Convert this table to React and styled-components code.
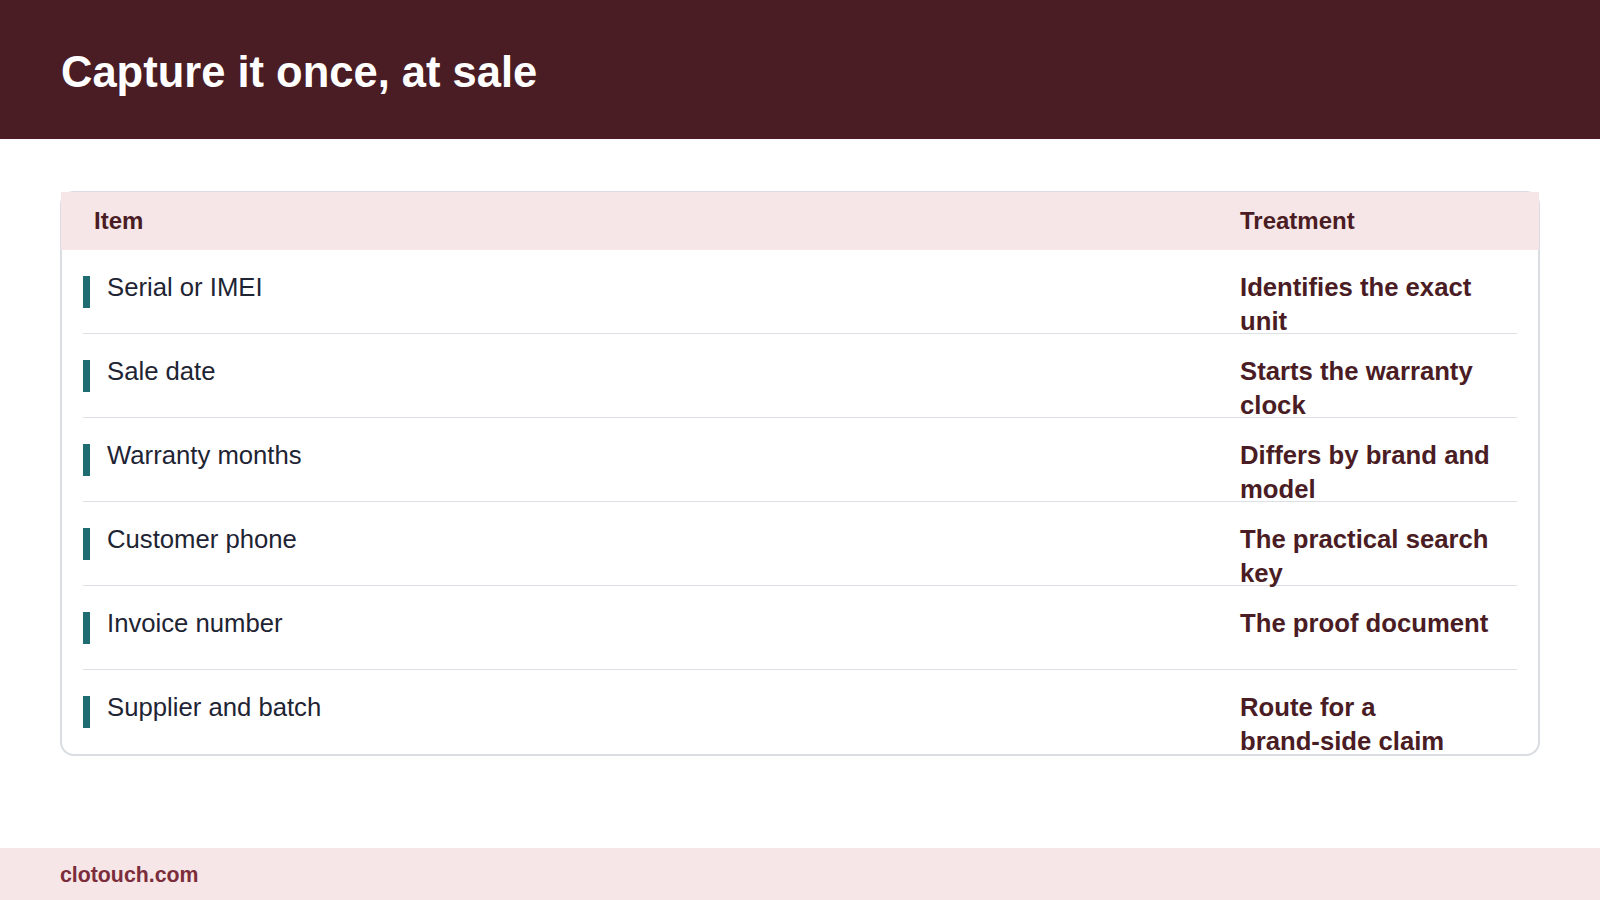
import styled, { createGlobalStyle } from 'styled-components';

const GlobalStyle = createGlobalStyle`
  html, body {
    margin: 0;
    padding: 0;
    background: #ffffff;
  }
  body {
    font-family: 'Liberation Sans', Arial, sans-serif;
  }
  * {
    box-sizing: border-box;
  }
`;

const Page = styled.div`
  width: 1600px;
  height: 900px;
  display: flex;
  flex-direction: column;
  overflow: hidden;
`;

const TopBar = styled.header`
  height: 139px;
  flex: none;
  background: #4a1c24;
  display: flex;
  align-items: center;
  padding: 6px 61px 0;
`;

const Title = styled.h1`
  margin: 0;
  color: #ffffff;
  font-size: 43.5px;
  font-weight: 700;
`;

const Main = styled.main`
  flex: 1;
  padding: 52px 60px 0;
`;

const Card = styled.div`
  border: 2px solid #d9dce2;
  border-radius: 14px;
`;

const HeadRow = styled.div`
  display: grid;
  grid-template-columns: 1fr 277px;
  align-items: center;
  height: 58px;
  margin: -1px -1px 0;
  padding: 0 22px 0 33px;
  background: #f6e6e7;
`;

const HeadCell = styled.div`
  color: #4a1c24;
  font-size: 24px;
  font-weight: 700;
`;

const Body = styled.div`
  padding: 0 21px;
`;

const Row = styled.div`
  display: grid;
  grid-template-columns: 1fr 277px;
  height: 84px;
  padding-top: 20px;
  border-bottom: ${(p) => (p.$last ? 'none' : '1px solid #dcdfe4')};
`;

const ItemCell = styled.div`
  display: flex;
  align-items: flex-start;
  gap: 17px;
`;

const Marker = styled.span`
  flex: none;
  width: 7px;
  height: 32px;
  margin-top: 6px;
  background: #1f6b72;
`;

const ItemText = styled.span`
  color: #1e2433;
  font-size: 25.7px;
  line-height: 34px;
`;

const Treatment = styled.div`
  padding-right: 12px;
  color: #4a1c24;
  font-size: 25.7px;
  font-weight: 700;
  line-height: 34px;
`;

const NoBreak = styled.span`
  white-space: nowrap;
`;

const Footer = styled.footer`
  height: 52px;
  flex: none;
  background: #f6e6e7;
  display: flex;
  align-items: center;
  padding: 2px 60px 0;
`;

const Domain = styled.span`
  color: #7b2d3b;
  font-size: 21.3px;
  font-weight: 700;
`;

const rows = [
  ['Serial or IMEI', 'Identifies the exact unit'],
  ['Sale date', 'Starts the warranty clock'],
  ['Warranty months', 'Differs by brand and model'],
  ['Customer phone', 'The practical search key'],
  ['Invoice number', 'The proof document'],
  ['Supplier and batch', 'Route for a brand-side claim'],
];

// keep hyphenated words together, as in the slide
const renderTreatment = (text) =>
  text.split(' ').map((word, i) => (
    <span key={i}>
      {i > 0 && ' '}
      {word.includes('-') ? <NoBreak>{word}</NoBreak> : word}
    </span>
  ));

export default function App() {
  return (
    <>
      <GlobalStyle />
      <Page>
        <TopBar>
          <Title>Capture it once, at sale</Title>
        </TopBar>
        <Main>
          <Card>
            <HeadRow>
              <HeadCell>Item</HeadCell>
              <HeadCell>Treatment</HeadCell>
            </HeadRow>
            <Body>
              {rows.map(([item, treatment], i) => (
                <Row key={item} $last={i === rows.length - 1}>
                  <ItemCell>
                    <Marker />
                    <ItemText>{item}</ItemText>
                  </ItemCell>
                  <Treatment>{renderTreatment(treatment)}</Treatment>
                </Row>
              ))}
            </Body>
          </Card>
        </Main>
        <Footer>
          <Domain>clotouch.com</Domain>
        </Footer>
      </Page>
    </>
  );
}
